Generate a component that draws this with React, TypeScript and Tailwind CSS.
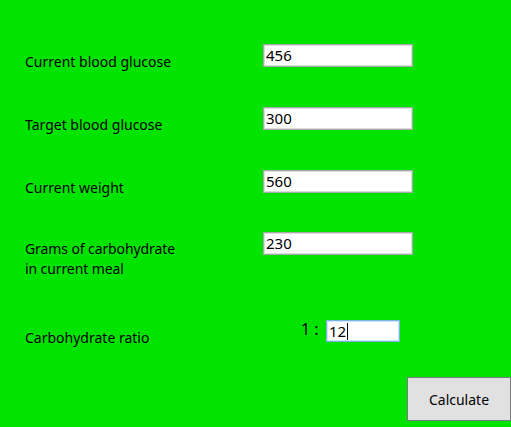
import React from "react";

const font = { fontFamily: '"Noto Sans", "Open Sans", sans-serif' };

function Field({ value }: { value: string }) {
  return (
    <div className="w-[150px] h-[23px] bg-white border border-[#a9a9a9] shadow-[inset_0_0_0_1px_#dcdcdc] flex items-center pl-[2px] text-[15px] text-black leading-none">
      {value}
    </div>
  );
}

export default function App() {
  return (
    <div
      className="w-[511px] h-[427px] bg-[#00e400] flex flex-col pt-[44px] pl-[25px] text-[14px] text-[#000] overflow-hidden"
      style={font}
    >
      <div className="flex items-start h-[63px]">
        <div className="w-[238px] pt-[8px] leading-[19px]">Current blood glucose</div>
        <Field value="456" />
      </div>
      <div className="flex items-start h-[63px]">
        <div className="w-[238px] pt-[8px] leading-[19px]">Target blood glucose</div>
        <Field value="300" />
      </div>
      <div className="flex items-start h-[62px]">
        <div className="w-[238px] pt-[8px] leading-[19px]">Current weight</div>
        <Field value="560" />
      </div>
      <div className="flex items-start h-[88px]">
        <div className="w-[238px] pt-[7px] leading-[20px] tracking-[-0.1px]">
          Grams of carbohydrate
          <br />
          in current meal
        </div>
        <Field value="230" />
      </div>
      <div className="flex items-start h-[57px]">
        <div className="w-[276px] pt-[8px] leading-[19px]">Carbohydrate ratio</div>
        <div className="w-[25px] text-[16px] leading-[19px] pt-[0px]">1 :</div>
        <div className="w-[74px] h-[22px] bg-white border border-[#7ab4e8] shadow-[inset_0_0_0_1px_#cfe3f6] flex items-center pl-[2px] text-[15px] leading-none">
          12<span className="inline-block w-[1px] h-[17px] bg-black ml-[1px]" />
        </div>
      </div>
      <div className="flex justify-end">
        <button className="w-[104px] h-[44px] bg-[#e1e1e1] border border-[#7a7a7a] text-[14px] text-black" style={font}>
          Calculate
        </button>
      </div>
    </div>
  );
}
